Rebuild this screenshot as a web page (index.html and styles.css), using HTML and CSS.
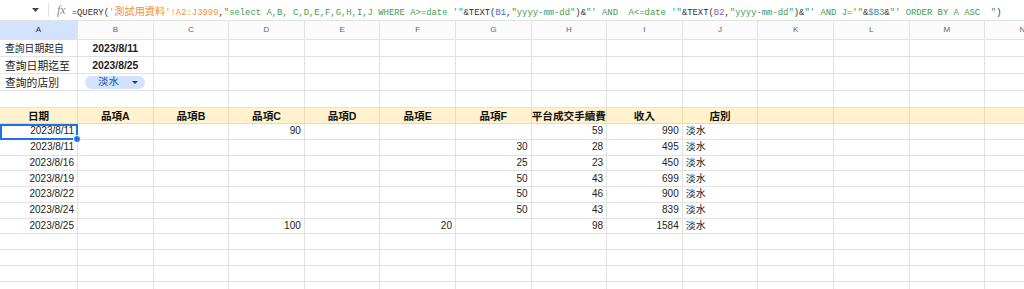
FILE: index.html
```html
<!DOCTYPE html>
<html>
    <head>
        <title>查詢</title>
        <link rel="stylesheet" href="styles.css">
    </head>
    <body>
        <div class="fbar">
            <svg class="fbar-arrow" width="7" height="4" viewBox="0 0 7 4"><path d="M0 0h7L3.5 4z" fill="#444"/></svg>
            <div class="fbar-sep"></div>
            <div class="fbar-fx">fx</div>
            <div class="fbar-text">=QUERY(<span class="o">'<span class="cjk">測試用資料</span>'!A2:J3999</span>,<span class="s">"select A,B, C,D,E,F,G,H,I,J WHERE A&gt;=date '"</span>&amp;TEXT(<span class="b1">B1</span>,<span class="s">"yyyy-mm-dd"</span>)&amp;<span class="s">"' AND  A&lt;=date '"</span>&amp;TEXT(<span class="b2">B2</span>,<span class="s">"yyyy-mm-dd"</span>)&amp;<span class="s">"' AND J='"</span>&amp;<span class="b3">$B3</span>&amp;<span class="s">"' ORDER BY A ASC  "</span>)</div>
        </div>

        <div class="sheet">
            <!-- column letters -->
            <div class="c ch sel">A</div><div class="c ch">B</div><div class="c ch">C</div><div class="c ch">D</div><div class="c ch">E</div><div class="c ch">F</div><div class="c ch">G</div><div class="c ch">H</div><div class="c ch">I</div><div class="c ch">J</div><div class="c ch">K</div><div class="c ch">L</div><div class="c ch">M</div><div class="c ch">N</div>

            <!-- query params -->
            <div class="c lbl small">查詢日期起自</div><div class="c m strong">2023/8/11</div><div class="c"></div><div class="c"></div><div class="c"></div><div class="c"></div><div class="c"></div><div class="c"></div><div class="c"></div><div class="c"></div><div class="c"></div><div class="c"></div><div class="c"></div><div class="c"></div>
            <div class="c lbl">查詢日期迄至</div><div class="c m strong">2023/8/25</div><div class="c"></div><div class="c"></div><div class="c"></div><div class="c"></div><div class="c"></div><div class="c"></div><div class="c"></div><div class="c"></div><div class="c"></div><div class="c"></div><div class="c"></div><div class="c"></div>
            <div class="c lbl">查詢的店別</div><div class="c chip-cell"><div class="chip"><span>淡水</span><svg width="6" height="3" viewBox="0 0 6 3"><path d="M0 0h6L3 3z" fill="#0b3d91"/></svg></div></div><div class="c"></div><div class="c"></div><div class="c"></div><div class="c"></div><div class="c"></div><div class="c"></div><div class="c"></div><div class="c"></div><div class="c"></div><div class="c"></div><div class="c"></div><div class="c"></div>
            <div class="c"></div><div class="c"></div><div class="c"></div><div class="c"></div><div class="c"></div><div class="c"></div><div class="c"></div><div class="c"></div><div class="c"></div><div class="c"></div><div class="c"></div><div class="c"></div><div class="c"></div><div class="c"></div>

            <!-- result header -->
            <div class="c hd">日期</div><div class="c hd">品項A</div><div class="c hd">品項B</div><div class="c hd">品項C</div><div class="c hd">品項D</div><div class="c hd">品項E</div><div class="c hd">品項F</div><div class="c hd">平台成交手續費</div><div class="c hd">收入</div><div class="c hd">店別</div><div class="c hd"></div><div class="c hd"></div><div class="c hd"></div><div class="c hd"></div>

            <!-- result rows -->
            <div class="c r cur">2023/8/11</div><div class="c"></div><div class="c"></div><div class="c r">90</div><div class="c"></div><div class="c"></div><div class="c"></div><div class="c r">59</div><div class="c r">990</div><div class="c">淡水</div><div class="c"></div><div class="c"></div><div class="c"></div><div class="c"></div>
            <div class="c r">2023/8/11</div><div class="c"></div><div class="c"></div><div class="c"></div><div class="c"></div><div class="c"></div><div class="c r">30</div><div class="c r">28</div><div class="c r">495</div><div class="c">淡水</div><div class="c"></div><div class="c"></div><div class="c"></div><div class="c"></div>
            <div class="c r">2023/8/16</div><div class="c"></div><div class="c"></div><div class="c"></div><div class="c"></div><div class="c"></div><div class="c r">25</div><div class="c r">23</div><div class="c r">450</div><div class="c">淡水</div><div class="c"></div><div class="c"></div><div class="c"></div><div class="c"></div>
            <div class="c r">2023/8/19</div><div class="c"></div><div class="c"></div><div class="c"></div><div class="c"></div><div class="c"></div><div class="c r">50</div><div class="c r">43</div><div class="c r">699</div><div class="c">淡水</div><div class="c"></div><div class="c"></div><div class="c"></div><div class="c"></div>
            <div class="c r">2023/8/22</div><div class="c"></div><div class="c"></div><div class="c"></div><div class="c"></div><div class="c"></div><div class="c r">50</div><div class="c r">46</div><div class="c r">900</div><div class="c">淡水</div><div class="c"></div><div class="c"></div><div class="c"></div><div class="c"></div>
            <div class="c r">2023/8/24</div><div class="c"></div><div class="c"></div><div class="c"></div><div class="c"></div><div class="c"></div><div class="c r">50</div><div class="c r">43</div><div class="c r">839</div><div class="c">淡水</div><div class="c"></div><div class="c"></div><div class="c"></div><div class="c"></div>
            <div class="c r">2023/8/25</div><div class="c"></div><div class="c"></div><div class="c r">100</div><div class="c"></div><div class="c r">20</div><div class="c"></div><div class="c r">98</div><div class="c r">1584</div><div class="c">淡水</div><div class="c"></div><div class="c"></div><div class="c"></div><div class="c"></div>

            <!-- empty rows -->
            <div class="c"></div><div class="c"></div><div class="c"></div><div class="c"></div><div class="c"></div><div class="c"></div><div class="c"></div><div class="c"></div><div class="c"></div><div class="c"></div><div class="c"></div><div class="c"></div><div class="c"></div><div class="c"></div>
            <div class="c"></div><div class="c"></div><div class="c"></div><div class="c"></div><div class="c"></div><div class="c"></div><div class="c"></div><div class="c"></div><div class="c"></div><div class="c"></div><div class="c"></div><div class="c"></div><div class="c"></div><div class="c"></div>
            <div class="c"></div><div class="c"></div><div class="c"></div><div class="c"></div><div class="c"></div><div class="c"></div><div class="c"></div><div class="c"></div><div class="c"></div><div class="c"></div><div class="c"></div><div class="c"></div><div class="c"></div><div class="c"></div>
            <div class="c"></div><div class="c"></div><div class="c"></div><div class="c"></div><div class="c"></div><div class="c"></div><div class="c"></div><div class="c"></div><div class="c"></div><div class="c"></div><div class="c"></div><div class="c"></div><div class="c"></div><div class="c"></div>
        </div>
    </body>
</html>
```

FILE: styles.css
```css
body {
  margin: 0;
  width: 1024px;
  height: 289px;
  overflow: hidden;
  background: #fff;
  font-family: "Liberation Sans", Arial, "Noto Sans CJK TC", sans-serif;
  color: #222;
}

/* formula bar */
.fbar {
  display: flex;
  align-items: center;
  height: 20px;
  border-bottom: 1px solid #e1e3e1;
  white-space: nowrap;
  overflow: hidden;
}

.fbar-arrow {
  margin-left: 32px;
}

.fbar-sep {
  width: 1px;
  height: 14px;
  margin-left: 9px;
  background: #e0e0e0;
}

.fbar-fx {
  margin-left: 8px;
  font: italic 12px "Liberation Serif", serif;
  color: #8a8a8a;
}

.fbar-text {
  margin-left: 6px;
  font-family: "Liberation Mono", "Noto Sans CJK TC", monospace;
  font-size: 8.9px;
  color: #333;
  white-space: pre;
}

.fbar-text .cjk {
  font-family: "Noto Sans CJK TC", sans-serif;
  font-size: 10.2px;
}

.o { color: #f0923a; }
.s { color: #3f9b4f; }
.b1 { color: #4b6cc4; }
.b2 { color: #8e5bc4; }
.b3 { color: #2a8fb0; }

/* grid */
.sheet {
  display: grid;
  grid-template-columns: 78px repeat(13, 75.6px);
  grid-template-rows: 19px 17px 17px 17px 17px 16px repeat(10, 15.75px) 20px;
}

.c {
  box-sizing: border-box;
  display: flex;
  align-items: center;
  min-width: 0;
  padding: 0 3px;
  border-right: 1px solid #e2e2e2;
  border-bottom: 1px solid #e2e2e2;
  font-size: 10px;
  line-height: 12px;
  white-space: nowrap;
  overflow: hidden;
}

.r { justify-content: flex-end; }
.m { justify-content: center; }

.ch {
  justify-content: center;
  background: #fbfbfc;
  font-size: 8px;
  color: #5f6368;
}

.ch.sel {
  background: #d3e3fd;
  color: #1f1f1f;
}

.lbl {
  padding-left: 5px;
  font-size: 10.8px;
  padding-top: 2px;
}

.lbl.small {
  font-size: 9.8px;
}

.strong {
  font-weight: bold;
  font-size: 10.4px;
  padding-top: 2px;
}

.chip-cell {
  padding-left: 7px;
}

.chip {
  display: flex;
  align-items: center;
  justify-content: space-between;
  box-sizing: border-box;
  width: 60px;
  height: 13px;
  padding: 0 7px 0 13px;
  border-radius: 7px;
  background: #d3e3fd;
  color: #1b4f9c;
  font-size: 10.4px;
}

.hd {
  justify-content: center;
  padding: 0;
  background: #fff2cc;
  border-color: #ecdcaa;
  font-weight: bold;
  font-size: 10.6px;
  color: #111;
}

/* active cell */
.cur {
  position: relative;
  z-index: 1;
  overflow: visible;
  outline: 2px solid #1a73e8;
  outline-offset: -2px;
}

.cur::after {
  content: "";
  position: absolute;
  right: -4px;
  bottom: -4px;
  width: 6px;
  height: 6px;
  border: 1px solid #fff;
  border-radius: 50%;
  background: #1a73e8;
}
```
